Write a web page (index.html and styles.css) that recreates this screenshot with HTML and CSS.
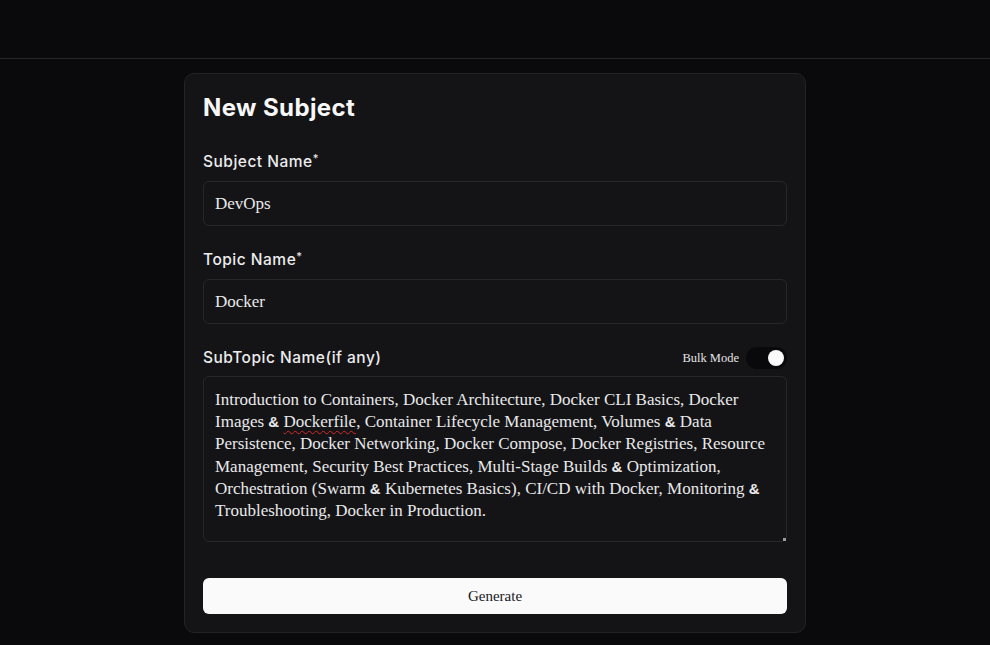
FILE: index.html
```html
<!DOCTYPE html>
<html>
<head>
<meta charset="utf-8">
<link rel="stylesheet" href="styles.css">
</head>
<body>
<header class="topbar"></header>
<main class="main">
  <section class="card">
    <h1 class="title">New Subject</h1>
    <div class="field">
      <label class="label">Subject Name<sup>*</sup></label>
      <div class="input">DevOps</div>
    </div>
    <div class="field">
      <label class="label">Topic Name<sup>*</sup></label>
      <div class="input">Docker</div>
    </div>
    <div class="field">
      <div class="label-row">
        <label class="label">SubTopic Name(if any)</label>
        <div class="bulk">
          <span class="bulk-text">Bulk Mode</span>
          <span class="toggle"><span class="knob"></span></span>
        </div>
      </div>
      <div class="textarea">Introduction to Containers, Docker Architecture, Docker CLI Basics, Docker Images <span class="amp">&amp;</span> <span class="misspelled">Dockerfile</span>, Container Lifecycle Management, Volumes <span class="amp">&amp;</span> Data Persistence, Docker Networking, Docker Compose, Docker Registries, Resource Management, Security Best Practices, Multi-Stage Builds <span class="amp">&amp;</span> Optimization, Orchestration (Swarm <span class="amp">&amp;</span> Kubernetes Basics), CI/CD with Docker, Monitoring <span class="amp">&amp;</span> Troubleshooting, Docker in Production.<span class="grip"></span></div>
    </div>
    <button class="btn">Generate</button>
  </section>
</main>
</body>
</html>
```
FILE: styles.css
```css
* { box-sizing: border-box; }
html, body { margin: 0; padding: 0; }
body {
  background: #0a0a0c;
  color: #f4f4f5;
  font-family: "Inter", "Liberation Sans", sans-serif;
  height: 645px;
  overflow: hidden;
}
.topbar {
  height: 59px;
  border-bottom: 1px solid #26262a;
  background: #0a0a0c;
}
.main {
  display: flex;
  justify-content: center;
  padding-top: 14px;
}
.card {
  width: 622px;
  background: #141416;
  border: 1px solid #232326;
  border-radius: 10px;
  padding: 18px 18px 18px 18px;
}
.title {
  margin: 0;
  font-family: "Inter", sans-serif;
  font-weight: 700;
  font-size: 24px;
  line-height: 32px;
  letter-spacing: 0.4px;
  color: #f7f7f8;
}
.field { margin-top: 23px; }
.title + .field { margin-top: 27px; }
.label {
  display: block;
  font-size: 15.5px;
  line-height: 22px;
  font-weight: 500;
  letter-spacing: 0.5px;
  color: #ececee;
}
.label sup {
  font-size: 11px;
  line-height: 0;
  vertical-align: 5px;
}
.input {
  margin-top: 8px;
  height: 45px;
  border: 1px solid #27272b;
  border-radius: 6px;
  padding: 0 11px;
  display: flex;
  align-items: center;
  font-family: "Liberation Serif", serif;
  font-size: 17px;
  color: #e9e9eb;
}
.label-row {
  display: flex;
  align-items: center;
  justify-content: space-between;
}
.bulk {
  display: flex;
  align-items: center;
  gap: 7px;
}
.bulk-text {
  font-family: "Liberation Serif", serif;
  font-size: 12.5px;
  color: #e4e4e7;
}
.toggle {
  width: 41px;
  height: 22px;
  border-radius: 11px;
  background: #09090b;
  display: flex;
  align-items: center;
  justify-content: flex-end;
  padding: 0 3px;
}
.knob {
  width: 16px;
  height: 16px;
  border-radius: 50%;
  background: #fafafa;
}
.textarea {
  position: relative;
  margin-top: 7px;
  height: 166px;
  border: 1px solid #27272b;
  border-radius: 6px;
  padding: 12px 11px;
  font-family: "Liberation Serif", serif;
  font-size: 17px;
  line-height: 22.2px;
  color: #e9e9eb;
}
.amp {
  font-family: "Liberation Sans", sans-serif;
  font-weight: 700;
  font-size: 15px;
}
.misspelled {
  text-decoration: underline wavy #d42a2a;
  text-decoration-thickness: 1px;
  text-underline-offset: 3px;
}
.grip {
  position: absolute;
  right: 0;
  bottom: 0;
  width: 3px;
  height: 3px;
  background: #9a9aa0;
}
.btn {
  display: block;
  width: 100%;
  margin-top: 36px;
  height: 36px;
  border: none;
  border-radius: 6px;
  background: #fafafa;
  color: #18181b;
  font-family: "Liberation Serif", serif;
  font-size: 15px;
  cursor: pointer;
}
```
